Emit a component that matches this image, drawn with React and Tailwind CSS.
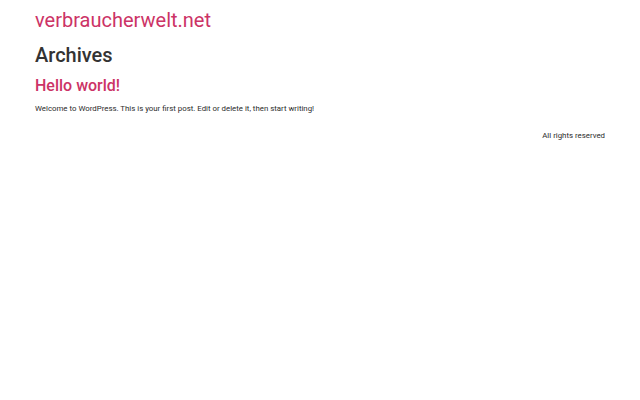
export default function App() {
  return (
    <div className="min-h-[400px] bg-white text-[#333333]" style={{ fontFamily: "Roboto, 'Liberation Sans', sans-serif" }}>
      <div className="px-[35px]">
        <header className="pt-[8px]">
          <a href="#" className="block text-[20px] leading-[24px] text-[#c36]">
            verbraucherwelt.net
          </a>
        </header>
        <main className="mt-[11px]">
          <h1 className="text-[20px] leading-[24px] font-medium">Archives</h1>
          <article className="mt-[9px]">
            <h2 className="text-[16px] leading-[20px] font-medium text-[#c36]">
              <a href="#">Hello world!</a>
            </h2>
            <p className="mt-[7px] text-[7.85px] leading-[12px] text-[#2b2b2b]">
              Welcome to WordPress. This is your first post. Edit or delete it, then start writing!
            </p>
          </article>
        </main>
        <footer className="mt-[15px] flex justify-end">
          <p className="text-[7.85px] leading-[12px] text-[#2b2b2b]">All rights reserved</p>
        </footer>
      </div>
    </div>
  );
}
